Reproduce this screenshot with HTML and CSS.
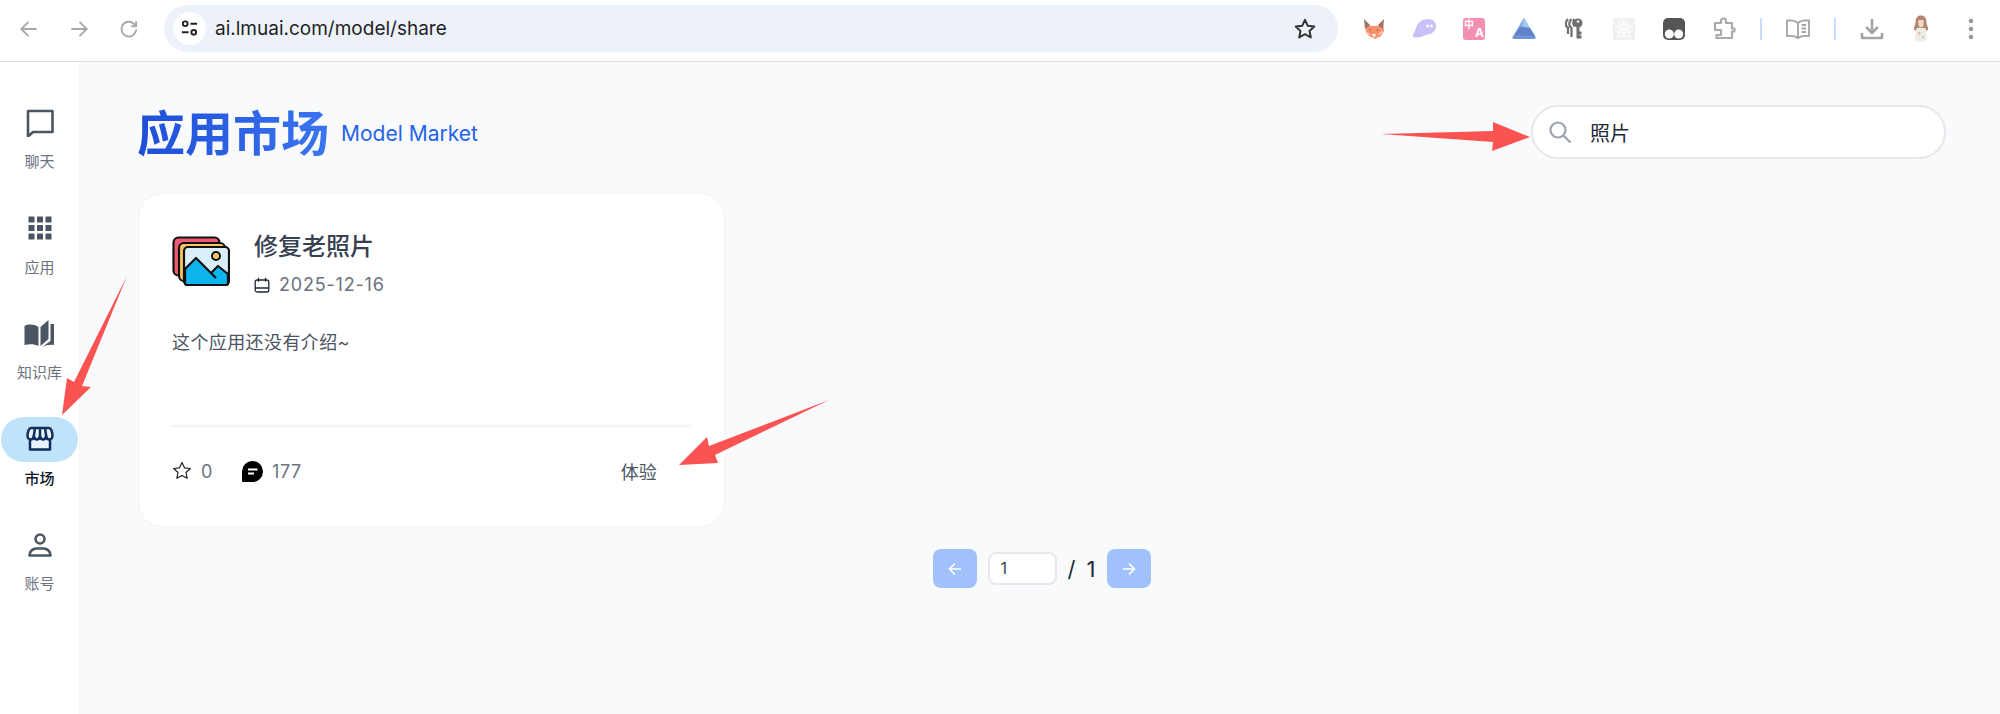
FILE: index.html
```html
<!DOCTYPE html>
<html lang="zh">
<head>
<meta charset="utf-8">
<title>应用市场</title>
<link rel="stylesheet" href="styles.css">
</head>
<body>
<header class="toolbar">
  <div class="nav-slot"><svg class="nav-icon" viewBox="0 0 20 20"><path d="M17 10H3.5M9.5 3.5 3 10l6.500 6.500"/></svg></div>
  <div class="nav-slot"><svg class="nav-icon" viewBox="0 0 20 20"><path d="M3 10h13.500M10.500 3.500 17 10l-6.500 6.500"/></svg></div>
  <div class="nav-slot"><svg class="nav-icon" viewBox="0 0 20 20"><path d="M16.500 10.500a6.700 6.700 0 1 1-2-5.200L16.500 7.500M16.500 2.800v4.700h-4.500"/></svg></div>
  <div class="omnibox">
    <span class="tune"><svg viewBox="0 0 20 20" class="tune-icon"><circle cx="5.500" cy="5" r="2.500"/><path d="M11 5h7M2 14h7"/><circle cx="14.500" cy="14" r="2.500"/></svg></span>
    <span class="url">ai.lmuai.com/model/share</span>
    <svg class="bookmark" viewBox="0 0 24 24"><path d="m12 2.800 2.800 6 6.500.8-4.800 4.400 1.300 6.500-5.800-3.300-5.800 3.300L7.500 14 2.700 9.600l6.500-.8z"/></svg>
  </div>
  <div class="extensions">
    <div class="ext"><svg width="22" height="20" viewBox="0 0 22 20"><path fill="#f99070" d="M2 4l6 3h6l6-3 1 8-3 5-4 2-2 1-2-1-4-2-3-5z"/><path fill="#9b7463" d="M1 0l6 6-5 4zM21 0l-6 6 5 4z"/><path fill="#fff" d="M9 15h4l-2 4z"/><path fill="#ffc9b0" d="M2 11l6 5-5-1zM20 11l-6 5 5-1z"/><circle cx="7.500" cy="11" r=".9" fill="#a5705c"/><circle cx="14.500" cy="11" r=".9" fill="#a5705c"/></svg></div>
    <div class="ext"><svg width="23" height="19" viewBox="0 0 23 19"><path fill="#c9c1f5" d="M0 17c0-3 2-4 3-8C4 4 9 0 15 0c5 0 8 3 8 7 0 4-3 7-6 8-3 1-5 1-8 2.500C5 19 0 19 0 17z"/><circle cx="14.500" cy="7" r="1.500" fill="#fff"/><circle cx="18.500" cy="7" r="1.500" fill="#fff"/></svg></div>
    <div class="ext"><span class="translate"><span class="tr-zh">中</span><span class="tr-a">A</span></span></div>
    <div class="ext"><svg width="24" height="21" viewBox="0 0 24 21"><path fill="#6f95d8" d="M12 0 24 20 22 21H2L0 20z"/><path fill="#a5c8f2" d="M12 0 18 10 8 8z"/><path fill="#86aee4" d="M6 10 12 0 10 9z"/><path fill="#5f83c9" d="M3 17 8 9l10 1 5 8z"/></svg></div>
    <div class="ext"><svg width="18" height="21" viewBox="0 0 18 21" fill="none" stroke="#6f6f6f" stroke-width="2.200"><path d="M3 1C0 4 0 8 3 10v6M6.500 1c-3 3-3 7 0 9v9M9.500 1C8 3 8 6 9.500 8.500"/><circle cx="13" cy="5" r="4.500" fill="#6f6f6f" stroke="none"/><path d="M13 7v13.500M13 15h3.500M13 19h3.500" stroke-width="3"/><circle cx="13" cy="3.500" r="1.200" fill="#fff" stroke="none"/></svg></div>
    <div class="ext"><svg width="22" height="22" viewBox="0 0 22 22"><rect width="22" height="22" rx="1.500" fill="#f0f0f0"/><g fill="none" stroke="#fff" stroke-width="1"><ellipse cx="11" cy="11" rx="9" ry="3.500"/><ellipse cx="11" cy="11" rx="9" ry="3.500" transform="rotate(60 11 11)"/><ellipse cx="11" cy="11" rx="9" ry="3.500" transform="rotate(120 11 11)"/></g><circle cx="11" cy="11" r="1.700" fill="#fff"/></svg></div>
    <div class="ext"><svg width="22" height="22" viewBox="0 0 22 22"><rect width="22" height="22" rx="5" fill="#555"/><circle cx="6.300" cy="16" r="4.500" fill="#fff"/><circle cx="15.700" cy="16" r="4.500" fill="#fff"/></svg></div>
    <div class="ext"><svg width="24" height="24" viewBox="0 0 24 24" fill="none" stroke="#aaa" stroke-width="2.200" stroke-linejoin="round"><path d="M3 6h6V4a2.500 2.500 0 0 1 5 0v2h6v5.500h2.500v3H20V21H4.500v-3H9v-5H3z"/></svg></div>
    <div class="ext-divider"></div>
    <div class="ext"><svg width="26" height="22" viewBox="0 0 26 22" fill="none" stroke="#a3a3a3" stroke-width="1.800" stroke-linejoin="round"><path d="M13 5C10 2 6 2 2 2.500V18c4-.5 8-.5 11 2 3-2.500 7-2.500 11-2V2.500C20 2 16 2 13 5zM13 5v15M16.500 7h4.500M16.500 10.500h4.500M16.500 14h4.500"/></svg></div>
    <div class="ext-divider"></div>
    <div class="ext"><svg width="24" height="24" viewBox="0 0 24 24" fill="none" stroke="#a3a3a3" stroke-width="2.600"><path d="M12 2v13M6 10l6 6 6-6M2 16v5h20v-5"/></svg></div>
    <div class="ext ext-avatar"><svg width="18" height="29" viewBox="0 0 20 29"><path fill="#b08672" d="M10 0c4 0 6 3 6 7 0 3 2 6 2 9l-3 1H5l-3-1c0-3 2-6 2-9 0-4 2-7 6-7z"/><path fill="#f0d5c2" d="M7 5h6v5l-1 3H8L7 10z"/><path fill="#eceee4" d="M5 14h10l2 13-3 2H6l-3-2z"/><circle cx="8" cy="20" r="1.500" fill="#d9bfa5"/><circle cx="12" cy="24" r="1.500" fill="#ccd3bb"/></svg></div>
    <div class="ext"><svg width="6" height="22" viewBox="0 0 6 22" fill="#9a9a9a"><circle cx="3" cy="3" r="2.300"/><circle cx="3" cy="11" r="2.300"/><circle cx="3" cy="19" r="2.300"/></svg></div>
  </div>
</header>

<div class="app">
  <nav class="sidebar">
    <a class="side-item">
      <span class="side-icon"><svg width="28" height="28" viewBox="0 0 28 28" fill="none" stroke="#4b5563" stroke-width="2.600" stroke-linejoin="round"><path d="M2 2h24.500v21H7l-5 4.500z"/></svg></span>
      <span class="side-label">聊天</span>
    </a>
    <a class="side-item">
      <span class="side-icon"><svg width="24" height="24" viewBox="0 0 24 24" fill="#4b5563"><rect x="0.500" y="0.500" width="6" height="6" rx=".5"/><rect x="9" y="0.500" width="6" height="6" rx=".5"/><rect x="17.500" y="0.500" width="6" height="6" rx=".5"/><rect x="0.500" y="9" width="6" height="6" rx=".5"/><rect x="9" y="9" width="6" height="6" rx=".5"/><rect x="17.500" y="9" width="6" height="6" rx=".5"/><rect x="0.500" y="17.500" width="6" height="6" rx=".5"/><rect x="9" y="17.500" width="6" height="6" rx=".5"/><rect x="17.500" y="17.500" width="6" height="6" rx=".5"/></svg></span>
      <span class="side-label">应用</span>
    </a>
    <a class="side-item">
      <span class="side-icon"><svg width="33" height="30" viewBox="0 0 32 30" fill="#4b5563"><path d="M1 7c4-2 9-2 14 1v19c-4-2-9-2-14-1z"/><path d="M17 8 25 1v19l-8 7z"/><path d="M27 5h3.500v21c-4-.5-8 0-12 2l8.500-6z"/></svg></span>
      <span class="side-label">知识库</span>
    </a>
    <a class="side-item side-item-active">
      <span class="side-icon"><svg width="28" height="26" viewBox="0 0 28 26" fill="#e6f3fd" stroke="#0f2f5c" stroke-width="2.500" stroke-linejoin="round"><path d="M4 14v9.500h20V14"/><path d="M5 2h18c2 0 3.500 4 3.500 8 0 2-1.500 3.500-3.200 3.500s-2.800-1.500-3.100-3.500c-.4 2-1.700 3.500-3.100 3.500S14.400 12 14 10c-.4 2-1.700 3.500-3.100 3.500S8.200 12 7.800 10c-.3 2-1.400 3.500-3.100 3.500S1.500 12 1.500 10C1.500 6 3 2 5 2z"/><path d="M9 2 7.800 10M19 2l1.200 8M14 2v8"/></svg></span>
      <span class="side-label">市场</span>
    </a>
    <a class="side-item">
      <span class="side-icon"><svg width="24" height="24" viewBox="0 0 24 24" fill="none" stroke="#4b5563" stroke-width="2.600"><circle cx="12" cy="6" r="4.500"/><path d="M1.500 22.500c0-4 3-7 7-7h7c4 0 7 3 7 7z" stroke-linejoin="round"/></svg></span>
      <span class="side-label">账号</span>
    </a>
  </nav>

  <main class="main">
    <div class="head">
      <div class="title-wrap">
        <h1 class="title">应用市场</h1>
        <span class="subtitle">Model Market</span>
      </div>
      <label class="search">
        <svg class="search-icon" viewBox="0 0 24 24" fill="none" stroke="#9ca3af" stroke-width="2.200"><circle cx="10" cy="10" r="7.500"/><path d="m15.500 15.500 7 7"/></svg>
        <span class="search-text">照片</span>
      </label>
    </div>

    <div class="cards">
      <article class="card">
        <div class="card-top">
          <svg class="app-icon" viewBox="0 0 58 50">
            <rect x="1.500" y="1.500" width="46" height="38" rx="5" fill="#ef5a78" stroke="#111" stroke-width="2.200"/>
            <rect x="7" y="7" width="46" height="38" rx="5" fill="#fbc75f" stroke="#111" stroke-width="2.200"/>
            <rect x="12" y="11" width="45" height="38" rx="4" fill="#d9effb" stroke="#111" stroke-width="2.200"/>
            <path d="M13 45V33l11-11 15 15 7-7 10 8v9c0 1-1 2-2 2H15c-1 0-2-1-2-2z" fill="#0eb4ee" stroke="#111" stroke-width="2.200" stroke-linejoin="round"/>
            <path d="M39 37l5 5" stroke="#111" stroke-width="2.200"/>
            <circle cx="44" cy="20" r="4" fill="#fbc75f" stroke="#111" stroke-width="2"/>
          </svg>
          <div class="card-meta">
            <h2 class="card-title">修复老照片</h2>
            <div class="card-date">
              <svg class="cal-icon" viewBox="0 0 16 16" fill="none" stroke="#1f2937" stroke-width="1.300"><rect x="1.200" y="3" width="13.600" height="12" rx="2"/><path d="M1.200 11h13.600M4.500 .8v4M11.500 .8v4"/></svg>
              <span>2025-12-16</span>
            </div>
          </div>
        </div>
        <p class="card-desc">这个应用还没有介绍~</p>
        <div class="card-foot">
          <div class="stats">
            <span class="stat">
              <svg class="stat-star" viewBox="0 0 20 20" fill="none" stroke="#222" stroke-width="1.200" stroke-linejoin="round"><path d="m10 1.500 2.500 5.300 5.900.7-4.400 4 1.200 5.800-5.200-2.900-5.200 2.900 1.200-5.800-4.400-4 5.900-.7z"/></svg>
              <span>0</span>
            </span>
            <span class="stat">
              <svg class="stat-chat" viewBox="0 0 21 21"><path fill="#000" d="M10.500 0a10.500 10.500 0 0 1 0 21H1.500c-1 0-1.500-.5-1.500-1.500v-9A10.500 10.500 0 0 1 10.500 0z"/><path fill="none" stroke="#fff" stroke-width="2" d="M6 8.500h9.500M6 12.500h6"/></svg>
              <span>177</span>
            </span>
          </div>
          <a class="try">体验</a>
        </div>
      </article>
    </div>

    <div class="pager">
      <button class="page-btn"><svg viewBox="0 0 16 16" class="page-arrow"><path d="M14 8H2.500M8 2.500 2.500 8 8 13.500"/></svg></button>
      <span class="page-input">1</span>
      <span class="page-total"><span>/</span><span>1</span></span>
      <button class="page-btn"><svg viewBox="0 0 16 16" class="page-arrow"><path d="M2 8h11.500M8 2.500 13.500 8 8 13.500"/></svg></button>
    </div>
  </main>
</div>

<svg class="annotations" viewBox="0 0 2000 714">
  <path d="M1381 134 1493 131 1493 122 1530 137 1492 151 1493 142z"/>
  <path d="M127 276 82 386 91 387 62 415 67 378 74 382z"/>
  <path d="M829 400 715 455 718 463 679 465 707 437 709 446z"/>
</svg>
</body>
</html>
```

FILE: styles.css
```css
* { box-sizing: border-box; }
html, body { margin: 0; height: 100%; }
body {
  width: 2000px;
  height: 714px;
  overflow: hidden;
  position: relative;
  background: #f9fafb;
  font-family: Inter, "Noto Sans CJK SC", sans-serif;
  color: #1f2937;
  display: flex;
  flex-direction: column;
}

/* browser chrome */
.toolbar {
  height: 62px;
  flex: none;
  display: flex;
  align-items: center;
  padding: 0 0 4px 4px;
  background: #fff;
  border-bottom: 1px solid #dedede;
}
.nav-slot { width: 50px; display: flex; justify-content: center; flex: none; }
.nav-icon { width: 22px; height: 22px; fill: none; stroke: #a8a8a8; stroke-width: 1.700; }
.omnibox {
  width: 1174px;
  height: 47px;
  margin-left: 10px;
  border-radius: 24px;
  background: #edf2fa;
  display: flex;
  align-items: center;
  padding: 0 21px 0 9px;
  flex: none;
}
.tune {
  width: 33px; height: 33px; border-radius: 50%;
  background: #fff;
  display: flex; align-items: center; justify-content: center;
}
.tune-icon { width: 19px; height: 19px; fill: none; stroke: #222; stroke-width: 2; }
.url { margin-left: 9px; font-size: 19px; color: #1f1f1f; flex: 1; }
.bookmark { width: 24px; height: 24px; fill: none; stroke: #333; stroke-width: 2; stroke-linejoin: round; }
.extensions { display: flex; align-items: center; margin-left: 11px; flex: none; }
.ext { width: 50px; display: flex; justify-content: center; align-items: center; flex: none; }
.ext-avatar { margin-left: -1px; }
.ext-divider { width: 2px; height: 22px; background: #c9dcfb; margin: 0 11px; flex: none; }
.translate {
  width: 22px; height: 22px; border-radius: 3px;
  background: #f48fb1;
  color: #fff;
  position: relative;
  display: block;
  overflow: hidden;
  font-weight: 700;
}
.tr-zh { position: absolute; left: 1px; top: 1px; font-size: 10px; line-height: 11px; }
.tr-a { position: absolute; right: 1px; bottom: 1px; font-size: 12px; line-height: 12px; }

/* app */
.app { flex: 1; display: flex; min-height: 0; }
.sidebar {
  width: 80px;
  flex: none;
  background: #fff;
  border-right: 1px solid #f3f4f6;
  padding: 38px 1px 0;
  display: flex;
  flex-direction: column;
  gap: 33.600px;
}
.side-item { display: flex; flex-direction: column; align-items: center; gap: 7px; }
.side-icon { width: 77px; height: 45px; border-radius: 23px; display: flex; align-items: center; justify-content: center; }
.side-label { font-size: 15px; line-height: 20px; color: #6b7280; }
.side-item-active .side-icon { background: #bfe3fa; }
.side-item-active .side-label { color: #111827; font-weight: 500; }

.main { flex: 1; min-width: 0; padding: 43px 54px 0 58px; }
.head { display: flex; align-items: center; justify-content: space-between; height: 54px; }
.title-wrap { display: flex; align-items: center; gap: 12px; padding-top: 3px; }
.title {
  margin: 0 0 0 -1px;
  font-size: 48px;
  line-height: 60px;
  font-weight: 700;
  background: linear-gradient(90deg, #1d4ed8, #3b74f0);
  color: #2563eb;
  -webkit-background-clip: text;
  background-clip: text;
  -webkit-text-fill-color: transparent;
}
.subtitle { font-size: 21px; color: #2563eb; }
.search {
  width: 415px; height: 54px;
  border: 2px solid #e5e7eb;
  border-radius: 27px;
  background: #fff;
  display: flex; align-items: center;
  padding-left: 15px;
}
.search-icon { width: 24px; height: 24px; }
.search-text { margin-left: 18px; font-size: 20px; color: #1f2937; }

.cards { display: grid; grid-template-columns: repeat(3, 1fr); gap: 24px; margin-top: 34px; }
.card {
  height: 334px;
  border: 1px solid #f3f4f6;
  border-radius: 24px;
  background: #fff;
  padding: 37px 33px 0;
  display: flex;
  flex-direction: column;
}
.card-top { display: flex; gap: 24px; height: 64px; flex: none; }
.app-icon { width: 58px; height: 50px; margin-top: 5px; flex: none; }
.card-meta { display: flex; flex-direction: column; }
.card-title { margin: 0; font-size: 24px; line-height: 32px; font-weight: 500; color: #374151; }
.card-date { display: flex; align-items: center; gap: 9px; margin-top: 9px; font-size: 18px; line-height: 26px; color: #6b7280; letter-spacing: .8px; }
.cal-icon { width: 16px; height: 16px; }
.card-desc { margin: 34px 0 0; font-size: 18px; line-height: 28px; color: #4b5563; height: 96px; flex: none; letter-spacing: .4px; }
.card-foot {
  border-top: 2px solid #f3f4f6;
  height: 90px;
  flex: none;
  display: flex;
  align-items: center;
  justify-content: space-between;
  padding-right: 34px;
  font-size: 18px;
  color: #6b7280;
  letter-spacing: .6px;
}
.stats { display: flex; gap: 29px; }
.stat { display: flex; align-items: center; gap: 9px; }
.stat-star { width: 20px; height: 20px; }
.stat-chat { width: 21px; height: 21px; }
.try { color: #4b5563; letter-spacing: 0; }

.pager { display: flex; align-items: center; justify-content: center; margin-top: 22px; }
.page-btn {
  width: 44px; height: 39px; padding: 0;
  border: 0; border-radius: 8px;
  background: #a1c1fd;
  display: flex; align-items: center; justify-content: center;
}
.page-arrow { width: 16px; height: 16px; fill: none; stroke: #fff; stroke-width: 1.600; }
.page-input {
  width: 69px; height: 33px;
  margin-left: 11px;
  border: 2px solid #e5e7eb;
  border-radius: 8px;
  background: #fff;
  padding-left: 11px;
  font-size: 16px;
  line-height: 29px;
  color: #374151;
}
.page-total { display: flex; gap: 11px; margin: 0 12px 0 11px; font-size: 22px; color: #1f2937; }

.annotations { position: absolute; left: 0; top: 0; width: 2000px; height: 714px; pointer-events: none; fill: #fb5252; }
```
